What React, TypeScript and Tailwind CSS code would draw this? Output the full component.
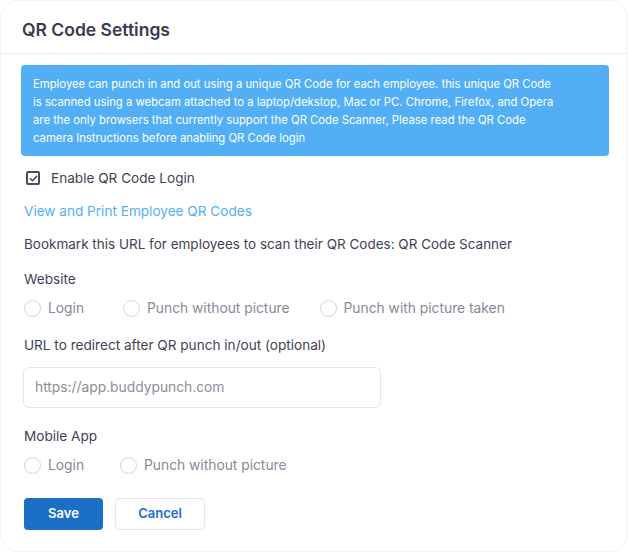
export default function App() {
  return (
    <div
      className="w-[628px] h-[552px] bg-white"
      style={{ fontFamily: 'Inter, "Noto Sans", sans-serif' }}
    >
      <div className="h-full rounded-[18px] border border-[#f3f3f6] bg-white">
        <div className="h-[53px] border-b border-[#ebebf2] px-[21px] pt-[6px] flex items-center">
          <h2 className="text-[17.5px] font-semibold text-[#3a3a4e]">QR Code Settings</h2>
        </div>
        <div className="px-[20px] pt-[11px]">
          <div className="w-[588px] h-[91px] rounded-[4px] bg-[#52aff5] px-[12px] pt-[10px] text-[11.3px] leading-[18px] text-white whitespace-nowrap">
            Employee can punch in and out using a unique QR Code for each employee. this unique QR Code
            <br />
            is scanned using a webcam attached to a laptop/dekstop, Mac or PC. Chrome, Firefox, and Opera
            <br />
            are the only browsers that currently support the QR Code Scanner, Please read the QR Code
            <br />
            camera Instructions before anabling QR Code login
          </div>
          <label className="mt-[12px] ml-[5px] flex items-center gap-[11px] text-[14px] text-[#3f4254]">
            <span className="w-[14px] h-[14px] rounded-[2px] border-2 border-[#4a4c5e] flex items-center justify-center">
              <svg width="9" height="9" viewBox="0 0 10 10" fill="none">
                <path d="M1.5 5.2 L4 7.5 L8.5 2.5" stroke="#3f4254" strokeWidth="1.6" strokeLinecap="round" strokeLinejoin="round" />
              </svg>
            </span>
            <span className="text-[13.6px]">Enable QR Code Login</span>
          </label>
          <a className="mt-[13px] ml-[3px] block text-[13.6px] text-[#52aff5]">View and Print Employee QR Codes</a>
          <p className="mt-[12px] ml-[3px] text-[13.5px] text-[#3f4254]">
            Bookmark this URL for employees to scan their QR Codes: QR Code Scanner
          </p>
          <p className="mt-[15px] ml-[3px] text-[13.6px] text-[#3f4254]">Website</p>
          <div className="mt-[9px] ml-[3px] flex items-center text-[13.8px] text-[#868998]">
            <Radio label="Login" className="mr-[39px]" />
            <Radio label="Punch without picture" className="mr-[30px]" />
            <Radio label="Punch with picture taken" />
          </div>
          <p className="mt-[16px] ml-[3px] text-[13.6px] text-[#3f4254]">URL to redirect after QR punch in/out (optional)</p>
          <div className="mt-[11px] ml-[2px] w-[358px] h-[41px] rounded-[6px] border border-[#e6e7ee] flex items-center px-[11px] text-[13.8px] text-[#8a8d99]">
            https://app.buddypunch.com
          </div>
          <p className="mt-[18px] ml-[3px] text-[13.6px] text-[#3f4254]">Mobile App</p>
          <div className="mt-[9px] ml-[3px] flex items-center text-[13.8px] text-[#868998]">
            <Radio label="Login" className="mr-[36px]" />
            <Radio label="Punch without picture" />
          </div>
          <div className="mt-[22px] ml-[3px] flex gap-[12px]">
            <button className="w-[79px] h-[32px] rounded-[4px] bg-[#1b6fc6] text-white text-[13px] font-semibold">Save</button>
            <button className="w-[90px] h-[32px] rounded-[4px] border border-[#e6e7ee] bg-white text-[#1b6fc6] text-[13px] font-semibold">Cancel</button>
          </div>
        </div>
      </div>
    </div>
  )
}

function Radio({ label, className = '' }: { label: string; className?: string }) {
  return (
    <label className={`flex items-center gap-[7px] ${className}`}>
      <span className="w-[17px] h-[17px] rounded-full border border-[#d3d4dc] bg-white" />
      {label}
    </label>
  )
}
